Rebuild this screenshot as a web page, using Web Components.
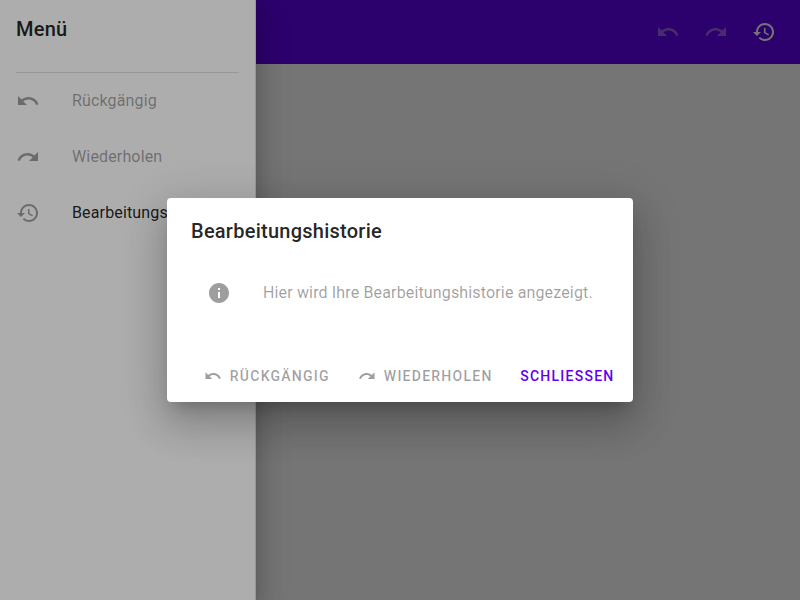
<!DOCTYPE html>
<html lang="de"><head><meta charset="utf-8"><title>Menü</title>
<style>html,body{margin:0;height:100%;overflow:hidden;font-family:Roboto,sans-serif;-webkit-font-smoothing:antialiased}</style></head>
<body><history-app></history-app>
<script>
const paths={
undo:'M12.5 8c-2.65 0-5.05.99-6.9 2.6L2 7v9h9l-3.62-3.62c1.39-1.16 3.16-1.88 5.12-1.88 3.54 0 6.55 2.31 7.6 5.5l2.37-.78C21.08 11.03 17.15 8 12.5 8z',
redo:'M18.4 10.6C16.55 8.99 14.15 8 11.5 8c-4.65 0-8.58 3.03-9.96 7.22L3.9 16c1.05-3.19 4.05-5.5 7.6-5.5 1.95 0 3.73.72 5.12 1.88L13 16h9V7l-3.6 3.6z',
history:'M13 3c-4.97 0-9 4.03-9 9H1l3.89 3.89.07.14L9 12H6c0-3.87 3.13-7 7-7s7 3.13 7 7-3.13 7-7 7c-1.93 0-3.68-.79-4.94-2.06l-1.42 1.42C8.27 19.99 10.51 21 13 21c4.97 0 9-4.03 9-9s-4.03-9-9-9zm-1 5v5l4.28 2.54.72-1.21-3.5-2.08V8H12z',
info:'M12 2C6.48 2 2 6.48 2 12s4.48 10 10 10 10-4.48 10-10S17.52 2 12 2zm1 15h-2v-6h2v6zm0-8h-2V7h2v2z'};
function define(name,html){customElements.define(name,class extends HTMLElement{constructor(){super();this.attachShadow({mode:'open'}).innerHTML=html;}});}
customElements.define('m-icon',class extends HTMLElement{connectedCallback(){if(this.shadowRoot)return;this.attachShadow({mode:'open'}).innerHTML=`<style>:host{display:block;flex:none;width:var(--icon-size,24px);height:var(--icon-size,24px)}svg{display:block;width:100%;height:100%;fill:currentColor}</style><svg viewBox="0 0 24 24"><path d="${paths[this.getAttribute('name')]}"/></svg>`;}});
define('top-bar',`<style>:host{display:flex;height:64px;box-sizing:border-box;justify-content:flex-end;align-items:center;gap:24px;padding-right:24px;background:#6200ee;color:#fff}</style><slot></slot>`);
define('menu-item',`<style>:host{display:flex;align-items:center;height:56px;padding-left:16px;color:rgba(0,0,0,.87);font-size:16px;letter-spacing:.15px;white-space:nowrap}:host([disabled]) span{color:rgba(0,0,0,.38)}span{margin-left:32px;padding-bottom:2px}</style><slot name="icon"></slot><span><slot></slot></span>`);
define('side-drawer',`<style>:host{display:block;position:relative;z-index:1;box-sizing:border-box;width:256px;height:600px;flex:none;background:#fff;border-right:1px solid #e0e0e0;box-shadow:0 8px 10px -5px #0003,0 16px 24px 2px #00000024,0 6px 30px 5px #0000001f}h2{margin:0;padding:13px 16px 0;height:59px;font:500 20px/32px Roboto,sans-serif;letter-spacing:.25px;color:rgba(0,0,0,.87)}hr{margin:0 16px;border:0;border-top:1px solid rgba(0,0,0,.12)}</style><h2>Menü</h2><hr><slot></slot>`);
define('text-button',`<style>:host{display:flex;align-items:center;height:36px;padding:0 8px;font-size:14px;font-weight:500;letter-spacing:1.25px;color:rgba(0,0,0,.38);--icon-size:18px}:host([primary]){color:#6200ee;margin-left:-.4px}::slotted(m-icon){margin-right:8px}</style><slot></slot>`);
define('history-dialog',`<style>:host{display:flex;flex-direction:column;width:466px;height:204px;border-radius:4px;background:#fff;box-shadow:0 11px 15px -7px #0003,0 24px 38px 3px #00000024,0 9px 46px 8px #0000001f}h2{margin:0;padding:17px 24px 0;height:45px;font:500 20px/32px Roboto,sans-serif;letter-spacing:.25px;color:rgba(0,0,0,.87)}.body{display:flex;align-items:center;height:66px;padding-left:40px;color:rgba(0,0,0,.38);font-size:16px;letter-spacing:.15px;gap:32px}.body span{padding-bottom:2px}footer{display:flex;justify-content:flex-end;gap:12px;margin-top:auto;padding:8px 10.5px 8px 0}</style><h2>Bearbeitungshistorie</h2><div class="body"><m-icon name="info"></m-icon><span>Hier wird Ihre Bearbeitungshistorie angezeigt.</span></div><footer><slot></slot></footer>`);
define('history-app',`<style>:host{display:block;width:800px;height:600px}.page{display:flex;background:#fff;height:600px}main{flex:1;position:relative;background:#fff}main::after{content:"";position:absolute;inset:0;background:rgba(0,0,0,.32)}.scrim{position:absolute;z-index:2;inset:0;display:flex;align-items:center;justify-content:center;background:rgba(0,0,0,.32)}side-drawer m-icon{color:rgba(0,0,0,.38)}.off{opacity:.38}</style><div class="page"><side-drawer><menu-item disabled><m-icon slot="icon" name="undo"></m-icon>Rückgängig</menu-item><menu-item disabled><m-icon slot="icon" name="redo"></m-icon>Wiederholen</menu-item><menu-item><m-icon slot="icon" name="history"></m-icon>Bearbeitungshistorie</menu-item></side-drawer><main><top-bar><m-icon class="off" name="undo"></m-icon><m-icon class="off" name="redo"></m-icon><m-icon name="history"></m-icon></top-bar></main></div><div class="scrim"><history-dialog><text-button><m-icon name="undo"></m-icon>RÜCKGÄNGIG</text-button><text-button><m-icon name="redo"></m-icon>WIEDERHOLEN</text-button><text-button primary>SCHLIESSEN</text-button></history-dialog></div>`);
</script></body></html>
